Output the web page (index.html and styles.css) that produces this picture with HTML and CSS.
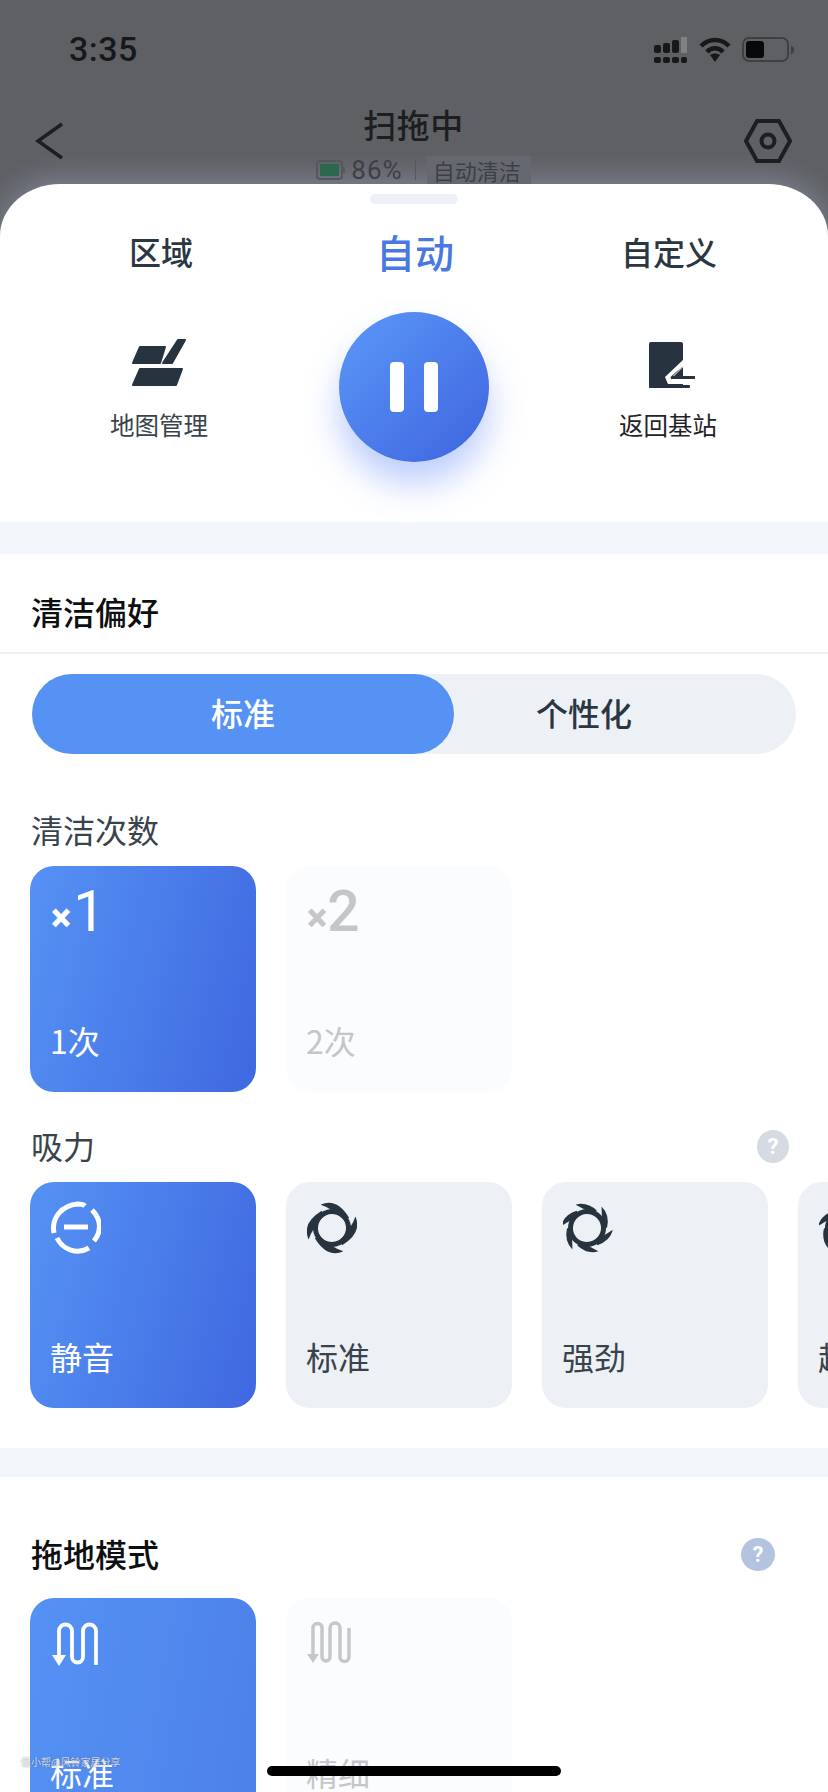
FILE: index.html
```html
<!DOCTYPE html>
<html lang="zh-CN">
<head>
    <meta charset="UTF-8">
    <meta name="viewport" content="width=device-width, initial-scale=1.0">
    <title>扫拖中</title>
    <link rel="stylesheet" href="styles.css">
</head>
<body>
    <svg class="defs" width="0" height="0">
        <defs>
            <path id="blade" d="M0 -26Q17.600 -25.500 19.900 -1.700L14.900 -1.300Q7.700 -19 0 -26Z"/>
            <path id="blade-short" d="M0 -26Q11.600 -23.900 16.400 -11.500L12.300 -8.600Q6 -18 0 -26Z"/>
        </defs>
    </svg>

    <div class="phone">
        <div class="status">
            <span class="time">3:35</span>
            <div class="status-icons">
                <svg width="34" height="26" viewBox="0 0 34 26" fill="#17181a">
                    <rect x="0" y="8" width="7" height="8" rx="2"/>
                    <rect x="9" y="6" width="7" height="10" rx="2"/>
                    <rect x="18" y="3" width="7" height="13" rx="2"/>
                    <rect x="27" y="0" width="6" height="16" fill="#808185"/>
                    <rect x="0" y="20" width="7" height="6" rx="2"/>
                    <rect x="9" y="20" width="7" height="6" rx="2"/>
                    <rect x="18" y="20" width="7" height="6" rx="2"/>
                    <rect x="27" y="20" width="6" height="6" rx="2"/>
                </svg>
                <svg width="32" height="26" viewBox="0 0 32 26" fill="none" stroke="#17181a" stroke-width="4.500">
                    <path d="M2 9C10 1 22 1 30 9"/>
                    <path d="M8 15C12 10 20 10 24 15"/>
                    <path d="M11 18L16 25L21 18C18 16 14 16 11 18Z" fill="#17181a" stroke="none"/>
                </svg>
                <svg width="52" height="26" viewBox="0 0 52 26">
                    <rect x="1" y="1" width="45" height="23" rx="6" fill="none" stroke="#3f4044" stroke-width="2"/>
                    <rect x="4" y="4" width="18" height="17" rx="3" fill="#08090a"/>
                    <path d="M49 8L52 11V15L49 18Z" fill="#3f4044"/>
                </svg>
            </div>
        </div>

        <div class="nav">
            <svg class="nav-back" width="28" height="38" viewBox="0 0 28 38" fill="none" stroke="#1c1e21" stroke-width="3.500">
                <path d="M27 2L3 19L27 36"/>
            </svg>
            <div class="nav-center">
                <div class="nav-title">扫拖中</div>
                <div class="nav-sub">
                    <svg width="29" height="20" viewBox="0 0 29 20">
                        <rect x="1" y="1" width="25" height="18" rx="3" fill="none" stroke="#54585a" stroke-width="2"/>
                        <rect x="4" y="4" width="19" height="12" fill="#2c6750"/>
                        <rect x="27" y="7" width="2" height="6" fill="#54585a"/>
                    </svg>
                    <span class="nav-battery">86%</span>
                    <span class="nav-line"></span>
                    <span class="nav-chip">自动清洁</span>
                </div>
            </div>
            <svg class="nav-gear" width="48" height="44" viewBox="0 0 48 44" fill="none" stroke="#1c1e21" stroke-width="4">
                <path d="M13 2H35L46 22L35 42H13L2 22Z"/>
                <circle cx="24" cy="22" r="6.500"/>
            </svg>
        </div>

        <div class="sheet">
            <div class="handle"></div>

            <div class="tabs">
                <div class="tab">区域</div>
                <div class="tab tab-active">自动</div>
                <div class="tab">自定义</div>
            </div>

            <div class="actions">
                <div class="action">
                    <svg width="60" height="50" viewBox="0 0 60 50" fill="#27343f" stroke="#27343f" stroke-width="2" stroke-linejoin="round">
                        <path d="M11 8H36L31 24H4Z"/>
                        <path d="M49 1H56L43 24H34Z"/>
                        <path d="M11 30H53L47 46H4Z"/>
                    </svg>
                    <span>地图管理</span>
                </div>
                <div class="pause">
                    <i></i><i></i>
                </div>
                <div class="action">
                    <svg width="60" height="50" viewBox="0 0 60 50">
                        <rect x="11" y="3" width="34" height="46" rx="2" fill="#27343f"/>
                        <rect x="11" y="46" width="41" height="3" rx="1" fill="#27343f"/>
                        <path d="M46 20V27L36 37H57V45H30L27 38Z" fill="#fff"/>
                        <path d="M45 27L35 37H57V40H33L32.500 38Z" fill="#27343f"/>
                    </svg>
                    <span class="action-dark">返回基站</span>
                </div>
            </div>

            <div class="band"></div>

            <div class="section-head">清洁偏好</div>

            <div class="toggle">
                <div class="toggle-on">标准</div>
                <div class="toggle-off">个性化</div>
            </div>

            <div class="label label-count">清洁次数</div>
            <div class="cards">
                <div class="card card-on">
                    <div class="times"><b>×</b><span class="times-one">1</span></div>
                    <div class="card-name">1次</div>
                </div>
                <div class="card card-off">
                    <div class="times"><b>×</b><span class="times-two">2</span></div>
                    <div class="card-name">2次</div>
                </div>
            </div>

            <div class="label label-suction">
                吸力
                <span class="help help-light">?</span>
            </div>
            <div class="cards">
                <div class="card card-on">
                    <svg width="50" height="60" viewBox="0 0 50 60" fill="none" stroke="#fff" stroke-width="5">
                        <path d="M3 35C0 20 11 7 27 6C31 6 33 7 34 8"/>
                        <path d="M41 12C50 21 51 33 43 43"/>
                        <path d="M38 50C26 57 12 52 6 40"/>
                        <path d="M13 29H37"/>
                    </svg>
                    <div class="card-name">静音</div>
                </div>
                <div class="card">
                    <svg width="50" height="60" viewBox="0 0 50 60" fill="#27343f">
                        <g transform="translate(25 30) rotate(-26)">
                            <circle r="16.500" fill="none" stroke="#27343f" stroke-width="5"/>
                            <use href="#blade"/>
                            <use href="#blade" transform="rotate(90)"/>
                            <use href="#blade" transform="rotate(180)"/>
                            <use href="#blade" transform="rotate(270)"/>
                        </g>
                    </svg>
                    <div class="card-name">标准</div>
                </div>
                <div class="card">
                    <svg width="50" height="60" viewBox="0 0 50 60" fill="#27343f">
                        <g transform="translate(24 30) rotate(-26)">
                            <circle r="16.500" fill="none" stroke="#27343f" stroke-width="5"/>
                            <use href="#blade-short"/>
                            <use href="#blade-short" transform="rotate(60)"/>
                            <use href="#blade-short" transform="rotate(120)"/>
                            <use href="#blade-short" transform="rotate(180)"/>
                            <use href="#blade-short" transform="rotate(240)"/>
                            <use href="#blade-short" transform="rotate(300)"/>
                        </g>
                    </svg>
                    <div class="card-name">强劲</div>
                </div>
                <div class="card">
                    <svg width="50" height="60" viewBox="0 0 50 60" fill="#27343f">
                        <g transform="translate(25 30) rotate(-26)">
                            <circle r="16.500" fill="none" stroke="#27343f" stroke-width="5"/>
                            <use href="#blade-short"/>
                            <use href="#blade-short" transform="rotate(60)"/>
                            <use href="#blade-short" transform="rotate(120)"/>
                            <use href="#blade-short" transform="rotate(180)"/>
                            <use href="#blade-short" transform="rotate(240)"/>
                            <use href="#blade-short" transform="rotate(300)"/>
                        </g>
                    </svg>
                    <div class="card-name">超强</div>
                </div>
            </div>

            <div class="band band-second"></div>

            <div class="label label-mop">
                拖地模式
                <span class="help help-blue">?</span>
            </div>
            <div class="cards">
                <div class="card card-on card-flat">
                    <svg width="50" height="60" viewBox="0 0 50 60" fill="none" stroke="#fff" stroke-width="3.800">
                        <path d="M8 44V17A6.500 6.500 0 0 1 21 17V43A5.500 5.500 0 0 0 32 43V17A6.500 6.500 0 0 1 45 17V51"/>
                        <path d="M1 41H15L8 52Z" fill="#fff" stroke="none"/>
                    </svg>
                    <div class="card-name">标准</div>
                </div>
                <div class="card card-off">
                    <svg width="50" height="60" viewBox="0 0 50 60" fill="none" stroke="#c5c7ca" stroke-width="3.500">
                        <path d="M6 42V14A4.500 4.500 0 0 1 15 14V43A4 4 0 0 0 23 43V14A5 5 0 0 1 33 14V43A4.500 4.500 0 0 0 42 43V14"/>
                        <path d="M0 40H12L6 49Z" fill="#c5c7ca" stroke="none"/>
                    </svg>
                    <div class="card-name">精细</div>
                </div>
            </div>
        </div>

        <div class="watermark">值小帮@风铃家居分享</div>
        <div class="home-bar"></div>
    </div>
</body>
</html>
```

FILE: styles.css
```css
* {
    box-sizing: border-box;
}

body {
    margin: 0;
    font-family: "Noto Sans CJK SC", "Noto Sans", sans-serif;
    color: #39434c;
}

.defs {
    position: absolute;
}

.phone {
    position: relative;
    width: 828px;
    height: 1792px;
    overflow: hidden;
    background-color: #5f6064;
}

/* status bar */
.status {
    height: 98px;
    padding: 37px 34px 0 69px;
    display: flex;
    justify-content: space-between;
    align-items: flex-start;
}

.time {
    font-family: Roboto, sans-serif;
    font-size: 34px;
    font-weight: 500;
    line-height: 24px;
    letter-spacing: 0.5px;
    color: #17181a;
}

.status-icons {
    display: flex;
    gap: 11px;
}

/* nav */
.nav {
    height: 86px;
    padding: 0 36px 0 35px;
    display: grid;
    grid-template-columns: 1fr auto 1fr;
    align-items: center;
}

.nav-gear {
    justify-self: end;
}

.nav-center {
    align-self: start;
    padding-top: 6px;
    display: flex;
    flex-direction: column;
    align-items: center;
}

.nav-title {
    font-size: 33px;
    font-weight: 500;
    line-height: 40px;
    letter-spacing: 0.5px;
    color: #1c1e21;
}

/* left padding puts the row off centre like the original */
.nav-sub {
    height: 28px;
    padding-left: 20px;
    display: flex;
    align-items: center;
    margin-top: 12px;
    color: #3c4046;
}

.nav-battery {
    margin-left: 6px;
    font-family: Roboto, sans-serif;
    font-size: 26px;
    letter-spacing: 1px;
}

.nav-line {
    width: 1px;
    height: 20px;
    margin: 0 11px 0 12px;
    background-color: #54585a;
}

.nav-chip {
    padding: 0 10px 0 6px;
    font-size: 22px;
    line-height: 28px;
    background-color: #666870;
}

/* sheet */
.sheet {
    height: 1608px;
    background-color: #fff;
    border-radius: 60px 60px 0 0 / 52px 52px 0 0;
    box-shadow: 0 -4px 30px rgba(190, 205, 245, 0.35);
}

.handle {
    width: 88px;
    height: 10px;
    margin: 0 auto;
    position: relative;
    top: 10px;
    border-radius: 5px;
    background-color: #eef1f8;
}

.tabs {
    height: 108px;
    padding: 6px 32px 0 34px;
    display: grid;
    grid-template-columns: repeat(3, 254px);
    align-items: center;
    text-align: center;
}

.tab {
    font-size: 32px;
    font-weight: 500;
    line-height: 40px;
    color: #2a3742;
}

.tab-active {
    font-size: 39px;
    color: #4a78e2;
}

.actions {
    height: 220px;
    padding: 10px 34px 0 32px;
    display: grid;
    grid-template-columns: 254px 256px 252px;
    justify-items: center;
    align-items: start;
}

.action {
    padding-top: 27px;
    display: flex;
    flex-direction: column;
    align-items: center;
    gap: 24px;
    font-size: 24.500px;
    line-height: 24px;
}

.action svg {
    display: block;
}

.action-dark {
    color: #1f2428;
}

.pause {
    width: 150px;
    height: 150px;
    border-radius: 50%;
    display: flex;
    justify-content: center;
    align-items: center;
    gap: 20px;
    background: linear-gradient(135deg, #5b98f9, #3e64de);
    box-shadow: 0 22px 34px rgba(70, 115, 245, 0.35);
}

.pause i {
    width: 14px;
    height: 50px;
    border-radius: 4px;
    background-color: #fff;
}

.band {
    height: 32px;
    background-color: #f2f5f9;
}

.band-second {
    height: 29px;
    margin-top: 40px;
}

.section-head {
    padding: 37px 32px 21px 31px;
    font-size: 32px;
    font-weight: 500;
    line-height: 40px;
    color: #0d0f10;
    border-bottom: 2px solid #eef0f2;
}

/* standard / custom switch */
.toggle {
    height: 80px;
    margin: 20px 32px 0;
    display: grid;
    grid-template-columns: 422px 260px;
    align-items: center;
    text-align: center;
    font-size: 32px;
    font-weight: 500;
    line-height: 76px;
    border-radius: 40px;
    background-color: #edf0f4;
}

.toggle-on {
    height: 80px;
    border-radius: 40px;
    color: #fff;
    background-color: #5592f4;
}

.toggle-off {
    height: 80px;
    color: #2a3742;
}

.label {
    padding: 0 32px 0 31px;
    display: flex;
    justify-content: space-between;
    align-items: center;
    font-size: 32px;
    line-height: 40px;
}

.label-count {
    margin-top: 55px;
    margin-bottom: 17px;
}

.label-suction {
    margin-top: 33px;
    margin-bottom: 17px;
    padding-right: 39px;
}

.label-mop {
    margin-top: 56px;
    margin-bottom: 25px;
    padding-right: 53px;
    font-weight: 500;
    color: #0d0f10;
}

.help {
    width: 32px;
    height: 33px;
    margin-top: 3px;
    border-radius: 50%;
    font-family: Roboto, sans-serif;
    font-size: 22px;
    font-weight: 700;
    line-height: 33px;
    text-align: center;
    color: #fff;
}

.help-light {
    background-color: #d6dae3;
}

.help-blue {
    width: 34px;
    background-color: #b3c3e0;
}

/* option cards */
.cards {
    padding-left: 30px;
    display: flex;
    gap: 30px;
}

.card {
    width: 226px;
    height: 226px;
    flex: none;
    padding: 16px 20px 32px 20px;
    display: flex;
    flex-direction: column;
    justify-content: space-between;
    border-radius: 24px;
    background-color: #edf0f4;
}

.card svg {
    display: block;
    margin-left: 1px;
}

.card-name {
    font-size: 32px;
    line-height: 40px;
}

.card-on {
    color: #fff;
    background: linear-gradient(105deg, #5592f4, #3f68e0);
}

.card-flat {
    background: linear-gradient(100deg, #5592f4, #4c80ea);
}

.card-off {
    color: #c4c6c9;
    background-color: #fbfcfd;
}

.times {
    height: 60px;
    display: flex;
    align-items: baseline;
    font-family: Roboto, sans-serif;
    font-size: 57px;
    line-height: 60px;
}

.times b {
    margin-left: 1px;
    font-size: 38px;
    font-weight: 900;
    line-height: 60px;
}

.times-one {
    margin-left: 2px;
    font-weight: 400;
}

.times-two {
    font-weight: 500;
}

/* overlays */
.watermark {
    position: absolute;
    left: 21px;
    top: 1755px;
    font-size: 10px;
    line-height: 14px;
    color: rgba(240, 240, 240, 0.75);
    text-shadow: 0 0 2px rgba(90, 90, 90, 0.6);
}

.home-bar {
    position: absolute;
    left: 267px;
    top: 1766px;
    width: 294px;
    height: 10px;
    border-radius: 5px;
    background-color: #000;
}
```
